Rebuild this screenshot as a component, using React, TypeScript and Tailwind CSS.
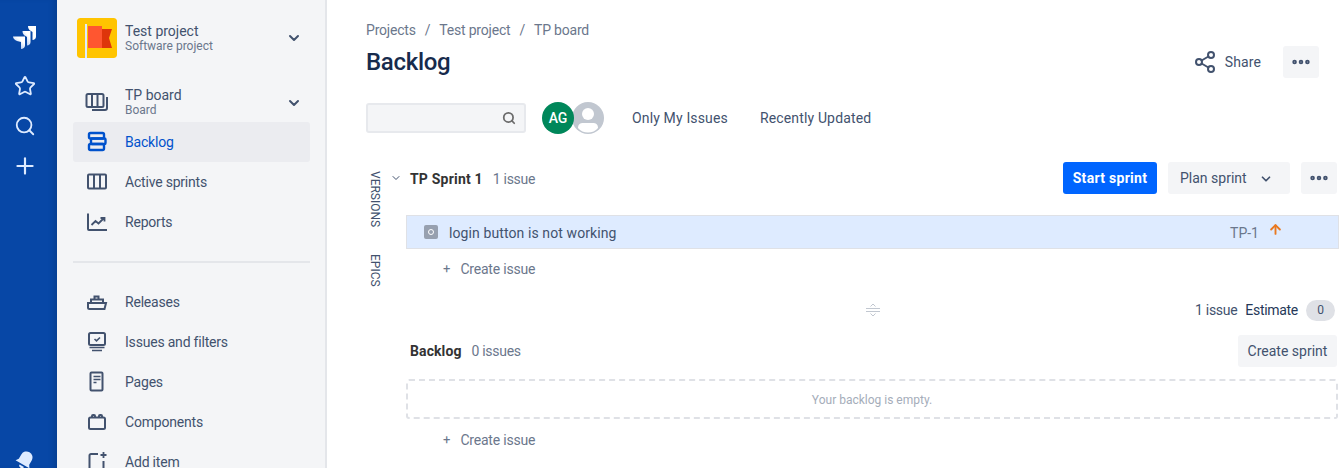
import React from 'react';
import { ChevronDown, Search, Plus, Star, Share2, Ellipsis, ArrowUp } from 'lucide-react';

const Logo = () => (
  <svg width="26" height="26" viewBox="0 0 26 26">
    <defs>
      <linearGradient id="lg" x1="1" y1="0" x2="0.2" y2="1">
        <stop offset="0.35" stopColor="#ffffff" />
        <stop offset="1" stopColor="#8DB4F0" />
      </linearGradient>
    </defs>
    <path d="M24 1h-8c0 2.500 1 4 3 5l1.500 1v8c2 0 3.500-1.500 3.500-3.500z" fill="#fff" />
    <path d="M18.500 6h-8c0 2.500 1 4 3 5l1.500 1v8.500c2 0 3.500-1.500 3.500-3.500z" fill="url(#lg)" />
    <path d="M13 11.500H1c0 2.500 2 3.500 4 4.500l4 1v7c2 0 4-1.500 4-3.500z" fill="url(#lg)" />
  </svg>
);

const BoardIcon = () => (
  <svg width="24" height="24" viewBox="0 0 24 24" fill="none" stroke="#42526E" strokeWidth="2">
    <rect x="1.500" y="3" width="17" height="13" rx="1.500" />
    <path d="M7 3v13M12.500 3v13M22 6v11a2 2 0 0 1-2 2H7" />
  </svg>
);
const BacklogIcon = () => (
  <svg width="24" height="24" viewBox="0 0 24 24" fill="none" stroke="#0052CC" strokeWidth="2.400">
    <rect x="6" y="8.500" width="14.500" height="5.500" rx="1" />
    <rect x="4" y="3" width="15" height="5.500" rx="1.500" />
    <rect x="4" y="14" width="15" height="6" rx="1.500" />
  </svg>
);
const SprintsIcon = () => (
  <svg width="24" height="24" viewBox="0 0 24 24" fill="none" stroke="#42526E" strokeWidth="2">
    <rect x="3" y="4.500" width="18" height="14" rx="1" />
    <path d="M9 4.500v14M15 4.500v14" />
  </svg>
);
const ReportsIcon = () => (
  <svg width="24" height="24" viewBox="0 0 24 24" fill="none" stroke="#42526E" strokeWidth="2">
    <path d="M3 3.500v15.500a1 1 0 0 0 1 1h18" />
    <path d="M6.500 15l4-4 3 2.500 5-5M15.500 8h4v3.500" strokeWidth="1.800" />
  </svg>
);
const ReleasesIcon = () => (
  <svg width="24" height="24" viewBox="0 0 24 24" fill="none" stroke="#42526E" strokeWidth="2">
    <path d="M3 13h18l-1.500 6H4.500a1.500 1.500 0 0 1-1.500-1.500z" />
    <path d="M6 13v-3.500h12V13M9.500 9.500V6.500h4V9.500" />
  </svg>
);
const IssuesIcon = () => (
  <svg width="24" height="24" viewBox="0 0 24 24" fill="none" stroke="#42526E" strokeWidth="2">
    <rect x="4" y="3" width="16" height="12" rx="1.500" />
    <path d="M9.500 9l2 1.800 3.500-3.300" strokeWidth="1.600" />
    <path d="M4.500 17.500h15M7 20.500h10" strokeWidth="1.500" />
  </svg>
);
const PagesIcon = () => (
  <svg width="24" height="24" viewBox="0 0 24 24" fill="none" stroke="#42526E" strokeWidth="2">
    <rect x="5.500" y="2.500" width="12" height="18" rx="1" />
    <path d="M8.500 6.500h7M8.500 9.500h7M8.500 12.500h3" strokeWidth="1.500" />
  </svg>
);
const ComponentsIcon = () => (
  <svg width="24" height="24" viewBox="0 0 24 24" fill="none" stroke="#42526E" strokeWidth="2">
    <rect x="4" y="7.500" width="16" height="11.500" rx="1.500" />
    <path d="M7 7.500v-1.500a1 1 0 0 1 1-1h1a1 1 0 0 1 1 1v1.500M14 7.500v-1.500a1 1 0 0 1 1-1h1a1 1 0 0 1 1 1v1.500" />
  </svg>
);
const AddItemIcon = () => (
  <svg width="24" height="24" viewBox="0 0 24 24" fill="none" stroke="#42526E" strokeWidth="2">
    <path d="M13 4H6a1.500 1.500 0 0 0-1.500 1.500V20a1.500 1.500 0 0 0 1.500 1.500h11a1.500 1.500 0 0 0 1.500-1.500V11" />
    <path d="M18.500 2v6M15.500 5h6" strokeWidth="1.800" />
  </svg>
);

const ProjectLogo = () => (
  <svg width="40" height="40" viewBox="0 0 40 40" className="rounded-[3px]">
    <rect width="40" height="40" rx="3" fill="#FFC400" />
    <rect x="8" y="6" width="2" height="34" fill="#DEEBFF" />
    <path d="M21 11h14l-3 9 3 10H21z" fill="#DE350B" />
    <rect x="11" y="8" width="14" height="22" fill="#FF5630" />
  </svg>
);

const UserIcon = () => (
  <svg width="32" height="32" viewBox="0 0 32 32">
    <circle cx="16" cy="16" r="16" fill="#C1C7D0" />
    <circle cx="16" cy="12" r="6" fill="#fff" />
    <path d="M6 26c0-4 2.500-5 5-5h10c2.500 0 5 1 5 5-2.500 3-6 4.500-10 4.500S8.500 29 6 26z" fill="#fff" />
  </svg>
);

const Bell = () => (
  <svg width="20" height="20" viewBox="0 0 20 20" fill="#DEEBFF" className="rotate-[30deg]">
    <path d="M10 1a6 6 0 0 0-6 6v5l-2 3h16l-2-3V7a6 6 0 0 0-6-6z" />
    <path d="M7.500 16.500a2.500 2.500 0 0 0 5 0z" />
  </svg>
);

const NavItem = ({ icon, label, active }: { icon: React.ReactNode; label: string; active?: boolean }) => (
  <div className={`flex items-center h-10 rounded-[3px] pl-3 gap-[16px] tracking-[-0.2px] ${active ? 'bg-[#EBECF0] text-[#0052CC]' : 'text-[#42526E]'}`}>
    <span className="w-6 h-6 shrink-0">{icon}</span>
    <span>{label}</span>
  </div>
);

const GreyButton = ({ children, className }: { children: React.ReactNode; className?: string }) => (
  <button className={`h-8 rounded-[3px] bg-[#F4F5F7] text-[#42526E] flex items-center justify-center ${className ?? ''}`}>
    {children}
  </button>
);

const CreateIssue = () => (
  <div className="flex items-center h-[20px] pl-[53px] gap-[10px] text-[#6B778C]">
    <span className="text-[13px]">+</span>
    <span className="tracking-[-0.2px]">Create issue</span>
  </div>
);

export default function App() {
  return (
    <div className="flex h-[468px] w-[1342px] overflow-hidden bg-white text-[14px] font-['Roboto',sans-serif]">
      {/* global nav */}
      <div className="w-[57px] shrink-0 bg-[#0747A6] flex flex-col items-center pt-[25px] pr-[8px] text-[#DEEBFF] shadow-[inset_-6px_0_6px_-4px_rgba(9,30,66,0.25)]">
        <Logo />
        <Star size={22} strokeWidth={2} className="mt-[24px]" />
        <Search size={22} strokeWidth={2} className="mt-[18px]" />
        <Plus size={26} strokeWidth={2} className="mt-[16px]" />
        <div className="mt-auto -mb-[2px]">
          <Bell />
        </div>
      </div>

      {/* project sidebar */}
      <div className="w-[270px] shrink-0 bg-[#F4F5F7] border-r-2 border-[#E4E6EA] pl-4 pr-[15px] pt-[18px]">
        <div className="flex items-center pl-1 pr-[5px]">
          <ProjectLogo />
          <div className="ml-2 flex-1 leading-[15px] pt-[1px]">
            <div className="text-[#42526E]">Test project</div>
            <div className="text-[12px] text-[#6B778C]">Software project</div>
          </div>
          <ChevronDown size={16} strokeWidth={3} className="text-[#42526E] mr-[3px]" />
        </div>

        <div className="mt-[17px] flex items-center h-[47px] pl-3 pr-[5px] pt-[8px] gap-[16px]">
          <BoardIcon />
          <div className="flex-1 leading-[15px]">
            <div className="text-[#42526E]">TP board</div>
            <div className="text-[12px] text-[#6B778C]">Board</div>
          </div>
          <ChevronDown size={16} strokeWidth={3} className="text-[#42526E] mr-[3px]" />
        </div>

        <NavItem icon={<BacklogIcon />} label="Backlog" active />
        <NavItem icon={<SprintsIcon />} label="Active sprints" />
        <NavItem icon={<ReportsIcon />} label="Reports" />

        <div className="h-[2px] bg-[#E4E6EA] my-[19px]" />

        <NavItem icon={<ReleasesIcon />} label="Releases" />
        <NavItem icon={<IssuesIcon />} label="Issues and filters" />
        <NavItem icon={<PagesIcon />} label="Pages" />
        <NavItem icon={<ComponentsIcon />} label="Components" />
        <NavItem icon={<AddItemIcon />} label="Add item" />
      </div>

      {/* main */}
      <div className="flex-1 min-w-0 pl-[39px] pr-[3px] text-[#42526E]">
        <div className="pt-[20px] flex items-center gap-[9px] text-[#6B778C] h-[41px] tracking-[-0.2px]">
          <span>Projects</span>
          <span>/</span>
          <span>Test project</span>
          <span>/</span>
          <span>TP board</span>
        </div>

        <div className="flex items-center justify-between h-[32px] mt-[5px]">
          <h1 className="text-[24px] leading-[32px] font-medium text-[#172B4D] tracking-[-0.3px]">Backlog</h1>
          <div className="flex items-center pr-[20px]">
            <Share2 size={24} strokeWidth={2} className="text-[#42526E]" />
            <span className="ml-[8px] mr-[22px] tracking-[0.1px]">Share</span>
            <GreyButton className="w-9">
              <Ellipsis size={22} strokeWidth={3} />
            </GreyButton>
          </div>
        </div>

        <div className="flex items-center h-[32px] mt-[24px]">
          <div className="w-[160px] h-[30px] rounded-[3px] bg-[#F4F5F7] border-2 border-[#E7E9ED] flex items-center justify-end pr-[8px]">
            <Search size={14} strokeWidth={3} className="text-[#6B6B6B]" />
          </div>
          <div className="ml-4 w-8 h-8 rounded-full bg-[#00875A] text-white font-medium flex items-center justify-center z-10">
            AG
          </div>
          <div className="-ml-[2px]">
            <UserIcon />
          </div>
          <span className="ml-7 tracking-[0.15px]">Only My Issues</span>
          <span className="ml-8 tracking-[0.15px]">Recently Updated</span>
        </div>

        <div className="flex mt-[28px]">
          {/* side tabs */}
          <div className="w-[24px] shrink-0 pt-[9px] flex flex-col items-start text-[12px] text-[#42526E] leading-[18px]">
            <span className="[writing-mode:vertical-rl] h-[55px]">VERSIONS</span>
            <span className="[writing-mode:vertical-rl] mt-[28px]">EPICS</span>
          </div>

          <div className="flex-1 min-w-0">
            <div className="flex items-center h-8 pr-[2px]">
              <ChevronDown size={12} strokeWidth={2} className="text-[#42526E]" />
              <span className="ml-[8px] mt-[2px] font-bold text-[#333333] tracking-[0.2px]">TP Sprint 1</span>
              <span className="ml-[10px] mt-[2px] text-[#6B778C] tracking-[-0.3px]">1 issue</span>
              <button className="ml-auto h-8 w-[94px] pt-[1px] rounded-[3px] bg-[#0065FF] text-white font-bold tracking-[0.3px]">Start sprint</button>
              <GreyButton className="ml-[11px] w-[122px] justify-start pl-3 pt-[1px] gap-[12px]">
                Plan sprint
                <ChevronDown size={14} strokeWidth={3} />
              </GreyButton>
              <GreyButton className="ml-[11px] w-9">
                <Ellipsis size={22} strokeWidth={3} />
              </GreyButton>
            </div>

            <div className="ml-[16px] mt-[21px] h-[34px] bg-[#DEEBFF] border border-[#DFE1E6] flex items-center pl-[17px] pr-[55px] pt-[2px]">
              <span className="w-[14px] h-[14px] -mt-[2px] rounded-[2px] bg-[#97A0AF] flex items-center justify-center">
                <span className="w-[6px] h-[6px] rounded-full border-[1.500px] border-white" />
              </span>
              <span className="ml-[11px] text-[#42526E] tracking-[0.1px]">login button is not working</span>
              <span className="ml-auto mr-[-1px] text-[#6B778C]">TP-1</span>
              <ArrowUp size={15} strokeWidth={3} className="ml-[10px] -mt-[8px] text-[#E9781F]" />
            </div>

            <div className="mt-[10px]">
              <CreateIssue />
            </div>

            <div className="flex items-center h-[22px] mt-[20px] pr-[4px]">
              <svg width="16" height="16" viewBox="0 0 16 16" className="ml-[475px]" fill="none" stroke="#C1C7D0" strokeWidth="1">
                <path d="M1 6.500h14M1 9.500h14M5.500 4.500L8 2l2.500 2.500M5.500 11.500L8 14l2.500-2.500" />
              </svg>
              <span className="ml-auto text-[#42526E] tracking-[-0.3px]">1 issue</span>
              <span className="ml-[8px] text-[#253858] tracking-[-0.3px]">Estimate</span>
              <span className="ml-[8px] w-[29px] h-[21px] rounded-full bg-[#DFE1E6] text-[12px] text-[#42526E] flex items-center justify-center">0</span>
            </div>

            <div className="flex items-center h-8 mt-[14px] pr-[2px]">
              <span className="ml-[20px] font-bold text-[#333333] tracking-[0.1px]">Backlog</span>
              <span className="ml-[10px] text-[#6B778C] tracking-[-0.3px]">0 issues</span>
              <GreyButton className="ml-auto w-[99px]">Create sprint</GreyButton>
            </div>

            <div className="ml-[16px] mt-[12px] mr-[1px] h-[40px] pt-[1px] border-2 border-dashed border-[#DFE1E6] rounded-[3px] flex items-center justify-center text-[12px] text-[#A5ADBA]">
              Your backlog is empty.
            </div>

            <div className="mt-[11px]">
              <CreateIssue />
            </div>
          </div>
        </div>
      </div>
    </div>
  );
}
